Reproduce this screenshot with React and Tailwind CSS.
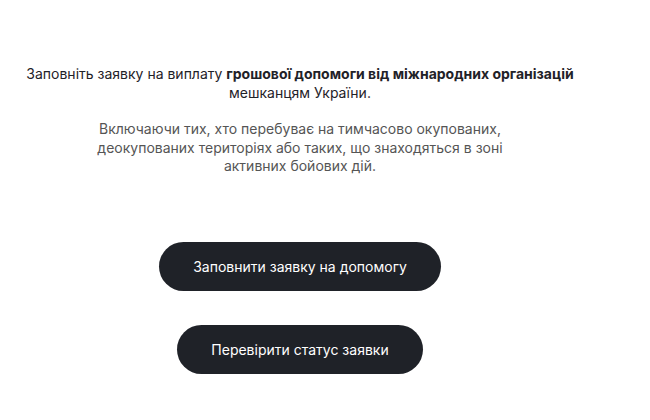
export default function App() {
  return (
    <div className="w-[600px] bg-white flex flex-col items-center pt-[64px] text-[14px] leading-[19px] text-[#1f2228]" style={{ fontFamily: 'Inter, "Liberation Sans", Arial, sans-serif' }}>
      <p className="text-center">
        Заповніть заявку на виплату <b className="font-bold">грошової допомоги від міжнародних організацій</b>
        <br />
        мешканцям України.
      </p>
      <p className="mt-[18px] w-[430px] text-center text-[#555] leading-[18.5px]">
        Включаючи тих, хто перебуває на тимчасово окупованих, деокупованих територіях або таких, що знаходяться в зоні активних бойових дій.
      </p>
      <button className="mt-[66px] h-[49px] px-[34px] rounded-full bg-[#1f2228] text-white text-[14px]">
        Заповнити заявку на допомогу
      </button>
      <button className="mt-[34px] h-[49px] px-[34px] rounded-full bg-[#1f2228] text-white text-[14px]">
        Перевірити статус заявки
      </button>
    </div>
  );
}
